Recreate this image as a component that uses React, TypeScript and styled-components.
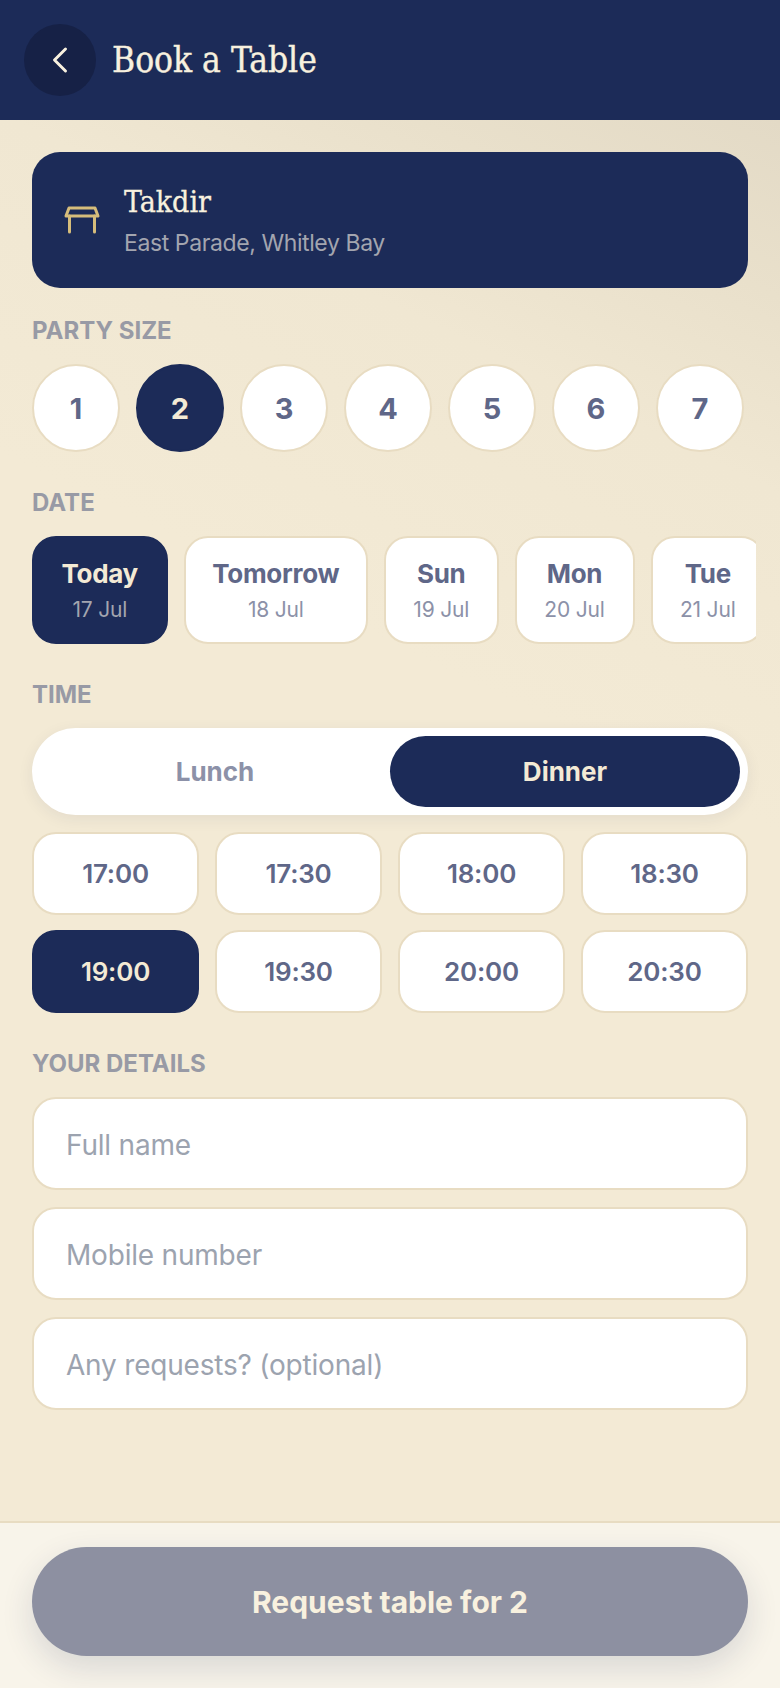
import { useState } from "react";
import styled, { createGlobalStyle } from "styled-components";
import { ChevronLeft } from "lucide-react";

const sans = `Inter, "Noto Sans", "Liberation Sans", sans-serif`;
const serif = `"DejaVu Serif Condensed", "Liberation Serif", serif`;
const navy = "#1c2b58";
const cream = "#f3ead5";
const line = "#e8dcc2";
const slate = "#5f6788";

const GlobalStyle = createGlobalStyle`
  html, body {
    margin: 0;
    padding: 0;
  }
  * {
    box-sizing: border-box;
  }
  input::placeholder {
    color: #9ca3af;
    opacity: 1;
  }
`;

const Page = styled.div`
  width: 780px;
  height: 1688px;
  display: flex;
  flex-direction: column;
  overflow: hidden;
  font-family: ${sans};
  background: ${cream};
`;

const Header = styled.header`
  height: 120px;
  flex: none;
  display: flex;
  align-items: center;
  gap: 16px;
  padding: 0 24px;
  background: ${navy};
`;

const BackButton = styled.button`
  width: 72px;
  height: 72px;
  padding: 0;
  border: none;
  border-radius: 50%;
  display: flex;
  align-items: center;
  justify-content: center;
  color: #f8f1df;
  background: #162146;
`;

const HeaderTitle = styled.h1`
  margin: 0;
  font-family: ${serif};
  font-size: 35px;
  font-weight: 400;
  -webkit-text-stroke: 0.4px #f8f1df;
  color: #f8f1df;
`;

const Body = styled.main`
  flex: 1;
  display: flex;
  flex-direction: column;
  padding: 32px 32px 0;
  background: linear-gradient(206deg, #e3dac6 0%, #e9e0cb 10%, #f0e7d2 21%, #f3ead5 40%, #f3ead5 100%);
`;

const VenueCard = styled.section`
  height: 136px;
  display: flex;
  align-items: center;
  gap: 24px;
  padding: 0 32px;
  border-radius: 28px;
  background: ${navy};
`;

const VenueName = styled.div`
  font-family: ${serif};
  font-size: 30px;
  font-weight: 400;
  -webkit-text-stroke: 0.3px #f8f1df;
  color: #f8f1df;
`;

const VenueAddress = styled.div`
  margin-top: 10px;
  font-size: 23px;
  letter-spacing: -0.4px;
  color: #a3a5af;
`;

const SectionLabel = styled.div<{ $top: number; $bottom: number }>`
  margin-top: ${(p) => p.$top}px;
  margin-bottom: ${(p) => p.$bottom}px;
  height: 28px;
  line-height: 28px;
  font-size: 24px;
  font-weight: 700;
  color: #989aa5;
`;

const PartyRow = styled.div`
  display: flex;
  gap: 16px;
`;

const PartyButton = styled.button<{ $active?: boolean }>`
  width: 88px;
  height: 88px;
  flex: none;
  padding: 0;
  border-radius: 50%;
  border: 2px solid ${(p) => (p.$active ? navy : line)};
  background: ${(p) => (p.$active ? navy : "#fff")};
  color: ${(p) => (p.$active ? cream : slate)};
  font-family: ${sans};
  font-size: 29px;
  font-weight: 700;
`;

const DateRow = styled.div`
  width: 724px;
  display: flex;
  gap: 16px;
  overflow: hidden;
`;

const DateChip = styled.button<{ $active?: boolean; $width: number }>`
  width: ${(p) => p.$width}px;
  height: 108px;
  flex: none;
  padding: 0 0 1px;
  display: flex;
  flex-direction: column;
  align-items: center;
  justify-content: center;
  gap: 8px;
  border-radius: 24px;
  border: 2px solid ${(p) => (p.$active ? navy : line)};
  background: ${(p) => (p.$active ? navy : "#fff")};
  font-family: ${sans};
`;

const DateDay = styled.span<{ $active?: boolean }>`
  font-size: 26px;
  font-weight: 700;
  letter-spacing: -0.3px;
  color: ${(p) => (p.$active ? cream : slate)};
`;

const DateNum = styled.span<{ $active?: boolean }>`
  font-size: 21px;
  letter-spacing: -0.2px;
  color: ${(p) => (p.$active ? "#a3a5af" : "#8c91a8")};
`;

const Toggle = styled.div`
  height: 87px;
  padding: 8px;
  display: grid;
  grid-template-columns: 1fr 1fr;
  border-radius: 44px;
  background: #fff;
  box-shadow: 0 4px 16px rgba(28, 43, 88, 0.07);
`;

const ToggleOption = styled.button<{ $active?: boolean }>`
  border: none;
  border-radius: 36px;
  background: ${(p) => (p.$active ? navy : "transparent")};
  color: ${(p) => (p.$active ? cream : "#8c91a8")};
  font-family: ${sans};
  font-size: 26px;
  font-weight: 700;
`;

const TimeGrid = styled.div`
  margin-top: 17px;
  display: grid;
  grid-template-columns: repeat(4, 1fr);
  gap: 15px 16px;
`;

const TimeSlot = styled.button<{ $active?: boolean }>`
  height: 83px;
  padding: 0 0 1px;
  border-radius: 24px;
  border: 2px solid ${(p) => (p.$active ? navy : line)};
  background: ${(p) => (p.$active ? navy : "#fff")};
  color: ${(p) => (p.$active ? cream : slate)};
  font-family: ${sans};
  font-size: 26px;
  font-weight: 600;
  letter-spacing: -0.2px;
`;

const Fields = styled.div`
  display: flex;
  flex-direction: column;
  gap: 17px;
`;

const Field = styled.input`
  width: 100%;
  height: 93px;
  padding: 2px 32px 0;
  border-radius: 24px;
  border: 2px solid ${line};
  background: #fff;
  outline: none;
  font-family: ${sans};
  font-size: 28px;
  letter-spacing: -0.2px;
  color: ${navy};
`;

const Footer = styled.footer`
  height: 167px;
  flex: none;
  padding: 24px 32px 0;
  background: #f8f4ea;
  border-top: 2px solid ${line};
`;

const SubmitButton = styled.button`
  width: 100%;
  height: 109px;
  border: none;
  border-radius: 55px;
  background: #8d90a1;
  color: #f8f1df;
  font-family: ${sans};
  font-size: 30px;
  font-weight: 700;
  box-shadow: 0 12px 32px rgba(28, 43, 88, 0.14);
`;

const TableIcon = () => (
  <svg width="36" height="28" viewBox="0 0 36 28" fill="none" stroke="#d6bd7b" strokeWidth="3" strokeLinejoin="round" strokeLinecap="round">
    <path d="M5 2h26l3 8H2z" />
    <path d="M5.5 10v16M30.5 10v16" />
  </svg>
);

const partySizes = [1, 2, 3, 4, 5, 6, 7];

const dates = [
  { day: "Today", num: "17 Jul", width: 135.5 },
  { day: "Tomorrow", num: "18 Jul", width: 184.5 },
  { day: "Sun", num: "19 Jul", width: 114.5 },
  { day: "Mon", num: "20 Jul", width: 120 },
  { day: "Tue", num: "21 Jul", width: 114.5 },
];

const times = ["17:00", "17:30", "18:00", "18:30", "19:00", "19:30", "20:00", "20:30"];

export default function App() {
  const [party, setParty] = useState(2);
  const [date, setDate] = useState("Today");
  const [service, setService] = useState("Dinner");
  const [time, setTime] = useState("19:00");

  return (
    <Page>
      <GlobalStyle />
      <Header>
        <BackButton aria-label="Back">
          <ChevronLeft size={44} strokeWidth={1.6} />
        </BackButton>
        <HeaderTitle>Book a Table</HeaderTitle>
      </Header>

      <Body>
        <VenueCard>
          <TableIcon />
          <div>
            <VenueName>Takdir</VenueName>
            <VenueAddress>East Parade, Whitley Bay</VenueAddress>
          </div>
        </VenueCard>

        <SectionLabel $top={29} $bottom={19}>PARTY SIZE</SectionLabel>
        <PartyRow>
          {partySizes.map((n) => (
            <PartyButton key={n} $active={n === party} onClick={() => setParty(n)}>
              {n}
            </PartyButton>
          ))}
        </PartyRow>

        <SectionLabel $top={37} $bottom={19}>DATE</SectionLabel>
        <DateRow>
          {dates.map((d) => (
            <DateChip key={d.day} $width={d.width} $active={d.day === date} onClick={() => setDate(d.day)}>
              <DateDay $active={d.day === date}>{d.day}</DateDay>
              <DateNum $active={d.day === date}>{d.num}</DateNum>
            </DateChip>
          ))}
        </DateRow>

        <SectionLabel $top={37} $bottom={19}>TIME</SectionLabel>
        <Toggle>
          {["Lunch", "Dinner"].map((s) => (
            <ToggleOption key={s} $active={s === service} onClick={() => setService(s)}>
              {s}
            </ToggleOption>
          ))}
        </Toggle>
        <TimeGrid>
          {times.map((t) => (
            <TimeSlot key={t} $active={t === time} onClick={() => setTime(t)}>
              {t}
            </TimeSlot>
          ))}
        </TimeGrid>

        <SectionLabel $top={37} $bottom={19}>YOUR DETAILS</SectionLabel>
        <Fields>
          <Field placeholder="Full name" />
          <Field placeholder="Mobile number" />
          <Field placeholder="Any requests? (optional)" />
        </Fields>
      </Body>

      <Footer>
        <SubmitButton>Request table for 2</SubmitButton>
      </Footer>
    </Page>
  );
}
